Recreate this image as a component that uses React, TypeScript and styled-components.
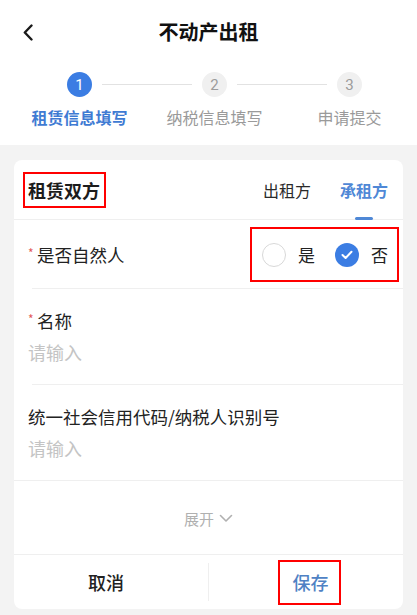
import React from 'react';
import styled, { createGlobalStyle } from 'styled-components';

const GlobalStyle = createGlobalStyle`
  html, body {
    margin: 0;
    padding: 0;
    background: #f3f3f3;
    font-family: "Noto Sans CJK SC", "Noto Sans", sans-serif;
    color: #222;
  }
  * { box-sizing: border-box; }
`;

const BLUE = '#3b7de3';

const Page = styled.div`
  width: 417px;
  min-height: 615px;
  background: #f3f3f3;
`;

const TopPanel = styled.div`
  background: #fff;
`;

const NavBar = styled.div`
  height: 64px;
  display: grid;
  grid-template-columns: 56px 1fr 56px;
  align-items: center;
`;

const BackButton = styled.button`
  border: 0;
  background: none;
  padding: 0 0 0 22px;
  display: flex;
  align-items: center;
  height: 100%;
`;

const NavTitle = styled.h1`
  margin: 0;
  text-align: center;
  font-size: 20px;
  font-weight: 700;
  color: #111;
  line-height: 28px;
`;

const Steps = styled.div`
  display: grid;
  grid-template-columns: repeat(3, 135px);
  padding: 8px 0 17px 12px;
`;

const Step = styled.div`
  display: flex;
  flex-direction: column;
  align-items: center;
  gap: 9px;
`;

const StepHead = styled.div`
  display: flex;
  align-items: center;
  width: 100%;
`;

const StepLine = styled.div<{ $hidden?: boolean }>`
  flex: 1;
  height: 1px;
  background: ${({ $hidden }) => ($hidden ? 'transparent' : '#e2e2e2')};
`;

const StepDot = styled.div<{ $active?: boolean }>`
  width: 25px;
  height: 25px;
  margin: 0 10px;
  border-radius: 50%;
  display: flex;
  align-items: center;
  justify-content: center;
  font-family: "Roboto", "Noto Sans", sans-serif;
  font-size: 15px;
  background: ${({ $active }) => ($active ? BLUE : '#f0f0f0')};
  color: ${({ $active }) => ($active ? '#fff' : '#9c9c9c')};
`;

const StepLabel = styled.div<{ $active?: boolean }>`
  font-size: 16px;
  line-height: 22px;
  white-space: nowrap;
  font-weight: ${({ $active }) => ($active ? 700 : 400)};
  color: ${({ $active }) => ($active ? '#3f7bd3' : '#9a9a9a')};
`;

const Card = styled.div`
  margin: 15px 14px 0;
  background: #fff;
  border-radius: 8px;
  overflow: hidden;
`;

const CardHeader = styled.div`
  height: 60px;
  display: flex;
  align-items: center;
  justify-content: space-between;
  padding: 0 15px 0 9px;
  border-bottom: 1px solid #efefef;
`;

const Marked = styled.div`
  border: 2px solid #f00;
`;

const CardTitle = styled(Marked)`
  font-size: 18px;
  font-weight: 700;
  line-height: 24px;
  padding: 4px 4px 4px 3px;
  color: #1c1c1c;
`;

const Tabs = styled.div`
  display: flex;
  gap: 29px;
  height: 100%;
`;

const Tab = styled.div<{ $active?: boolean }>`
  position: relative;
  display: flex;
  align-items: center;
  font-size: 16px;
  font-weight: ${({ $active }) => ($active ? 600 : 400)};
  color: ${({ $active }) => ($active ? '#4f88d6' : '#2a2a2a')};

  &::after {
    content: '';
    display: ${({ $active }) => ($active ? 'block' : 'none')};
    position: absolute;
    left: 50%;
    bottom: -1px;
    width: 18px;
    height: 3px;
    margin-left: -9px;
    border-radius: 2px;
    background: #4f88d6;
  }
`;

const Row = styled.div<{ $full?: boolean }>`
  position: relative;
  padding: 0 14px;

  &::after {
    content: '';
    position: absolute;
    left: ${({ $full }) => ($full ? '0' : '18px')};
    right: 0;
    bottom: 0;
    height: 1px;
    background: #efefef;
  }
`;

const InlineRow = styled(Row)`
  height: 69px;
  display: flex;
  align-items: center;
  justify-content: space-between;
  padding-right: 4px;
`;

const FieldRow = styled(Row)`
  height: 96px;
  padding-top: 20px;
  display: flex;
  flex-direction: column;
  gap: 7px;
`;

const Label = styled.div`
  font-size: 17.5px;
  line-height: 24px;
  color: #222;
  display: flex;
  align-items: center;
  white-space: nowrap;
`;

const Required = styled.span`
  color: #e35a5a;
  font-size: 12px;
  width: 9px;
  margin-top: -4px;
`;

const Placeholder = styled.div`
  font-size: 18px;
  line-height: 24px;
  color: #c4c4c4;
`;

const RadioGroup = styled(Marked)`
  height: 55px;
  display: flex;
  align-items: center;
  padding: 0 9px 0 10px;
`;

const RadioOption = styled.label`
  display: flex;
  align-items: center;
  gap: 12px;
  font-size: 17px;
  color: #222;

  & + & {
    margin-left: 20px;
  }
`;

const RadioCircle = styled.span<{ $checked?: boolean }>`
  width: 24px;
  height: 24px;
  border-radius: 50%;
  display: flex;
  align-items: center;
  justify-content: center;
  border: ${({ $checked }) => ($checked ? 'none' : '1.5px solid #d8d8d8')};
  background: ${({ $checked }) => ($checked ? BLUE : '#fff')};
`;

const ExpandRow = styled(Row)`
  height: 74px;
  display: flex;
  align-items: center;
  justify-content: center;
  gap: 5px;
  font-size: 15px;
  color: #b0b0b0;
`;

const Footer = styled.div`
  height: 54px;
  display: grid;
  grid-template-columns: 1fr 1px 1fr;
  align-items: center;
`;

const FooterDivider = styled.div`
  height: 38px;
  background: #efefef;
`;

const FooterButton = styled.button<{ $primary?: boolean }>`
  border: 0;
  padding: 0;
  background: none;
  font-family: inherit;
  font-size: 18px;
  line-height: 24px;
  font-weight: 500;
  color: ${({ $primary }) => ($primary ? '#4f82c4' : '#222')};
  justify-self: center;
`;

const SaveBox = styled(Marked)`
  height: 45px;
  display: flex;
  align-items: center;
  padding: 0 10px 0 13px;
  justify-self: center;
  margin-left: 6px;
`;

const CancelButton = styled(FooterButton)`
  margin-right: 10px;
`;

const steps = ['租赁信息填写', '纳税信息填写', '申请提交'];

export default function App() {
  return (
    <Page>
      <GlobalStyle />
      <TopPanel>
        <NavBar>
          <BackButton aria-label="返回">
            <svg width="12" height="17" viewBox="0 0 12 17">
              <path d="M9.5 1.5 L2.8 8.5 L9.5 15.5" fill="none" stroke="#1a1a1a" strokeWidth="2.4" strokeLinecap="round" strokeLinejoin="round" />
            </svg>
          </BackButton>
          <NavTitle>不动产出租</NavTitle>
          <span />
        </NavBar>
        <Steps>
          {steps.map((s, i) => (
            <Step key={s}>
              <StepHead>
                <StepLine $hidden={i === 0} />
                <StepDot $active={i === 0}>{i + 1}</StepDot>
                <StepLine $hidden={i === steps.length - 1} />
              </StepHead>
              <StepLabel $active={i === 0}>{s}</StepLabel>
            </Step>
          ))}
        </Steps>
      </TopPanel>

      <Card>
        <CardHeader>
          <CardTitle>租赁双方</CardTitle>
          <Tabs>
            <Tab>出租方</Tab>
            <Tab $active>承租方</Tab>
          </Tabs>
        </CardHeader>

        <InlineRow>
          <Label>
            <Required>*</Required>是否自然人
          </Label>
          <RadioGroup>
            <RadioOption>
              <RadioCircle />是
            </RadioOption>
            <RadioOption>
              <RadioCircle $checked>
                <svg width="12" height="10" viewBox="0 0 12 10">
                  <path d="M1.5 5 L4.6 8 L10.5 1.8" fill="none" stroke="#fff" strokeWidth="2" strokeLinecap="round" strokeLinejoin="round" />
                </svg>
              </RadioCircle>
              否
            </RadioOption>
          </RadioGroup>
        </InlineRow>

        <FieldRow>
          <Label>
            <Required>*</Required>名称
          </Label>
          <Placeholder>请输入</Placeholder>
        </FieldRow>

        <FieldRow $full>
          <Label>统一社会信用代码/纳税人识别号</Label>
          <Placeholder>请输入</Placeholder>
        </FieldRow>

        <ExpandRow $full>
          展开
          <svg width="14" height="9" viewBox="0 0 14 9">
            <path d="M1.5 1.5 L7 7 L12.5 1.5" fill="none" stroke="#b0b0b0" strokeWidth="1.6" strokeLinecap="round" strokeLinejoin="round" />
          </svg>
        </ExpandRow>

        <Footer>
          <CancelButton>取消</CancelButton>
          <FooterDivider />
          <SaveBox>
            <FooterButton $primary>保存</FooterButton>
          </SaveBox>
        </Footer>
      </Card>
    </Page>
  );
}
